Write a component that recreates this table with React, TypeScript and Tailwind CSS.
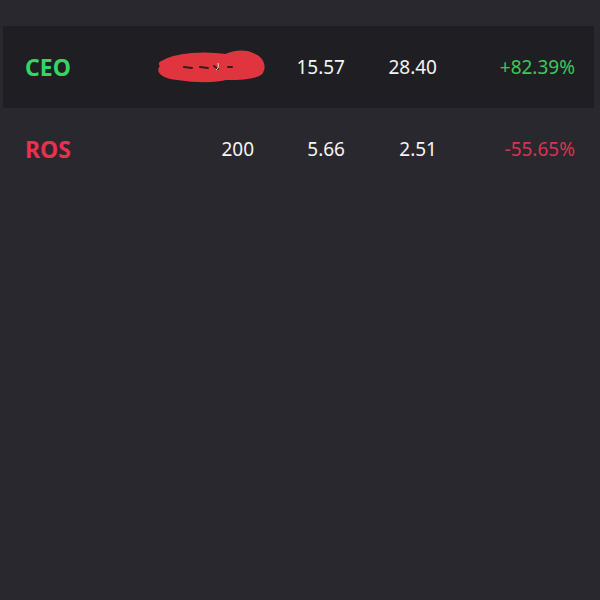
const rows = [
  { name: 'CEO', qty: '', cost: '15.57', price: '28.40', change: '+82.39%', up: true, hidden: true },
  { name: 'ROS', qty: '200', cost: '5.66', price: '2.51', change: '-55.65%', up: false, hidden: false },
]

function Scribble() {
  return (
    <svg width="112" height="36" viewBox="0 0 112 36" className="absolute left-[-4px] top-[-19px]">
      <path
        d="M6 16 C20 7 50 6 70 9 C80 4 92 5 96 8 C104 10 108 18 104 24 C98 29 80 29 70 29 C60 32 40 32 22 29 C10 28 3 24 6 20 C10 14 40 12 60 14 C80 14 98 16 100 20 C96 24 70 26 45 26 C30 26 14 24 12 20"
        fill="#e0353f"
        stroke="#e0353f"
        strokeWidth="6"
        strokeLinejoin="round"
        strokeLinecap="round"
      />
      <path d="M28 19 L36 20 M44 19 L52 20 M58 18 L62 21 M72 19 L76 19" stroke="#3a1a1e" strokeWidth="2" strokeLinecap="round" />
      <path d="M62 15 C63 18 62 21 60 22" stroke="#f4d6d6" strokeWidth="1" fill="none" />
    </svg>
  )
}

export default function App() {
  return (
    <div className="h-[600px] w-[600px] bg-[#29282e] pt-[26px] font-['Noto_Sans',sans-serif]">
      {rows.map((r) => (
        <div
          key={r.name}
          className={`ml-[3px] flex h-[82px] w-[591px] items-center pl-[22px] pr-[19px] text-[19px] text-[#f4f4f4] ${
            r.hidden ? 'bg-[#1f1f23]' : ''
          }`}
        >
          <div
            className={`w-[135px] text-[23px] font-bold ${r.up ? 'text-[#35d466]' : 'text-[#e8304f]'}`}
          >
            {r.name}
          </div>
          <div className="relative w-[94px] text-right">
            {r.hidden ? <Scribble /> : r.qty}
          </div>
          <div className="w-[91px] text-right">{r.cost}</div>
          <div className="w-[92px] text-right">{r.price}</div>
          <div className={`w-[138px] text-right ${r.up ? 'text-[#3cc75c]' : 'text-[#d8344f]'}`}>{r.change}</div>
        </div>
      ))}
    </div>
  )
}
